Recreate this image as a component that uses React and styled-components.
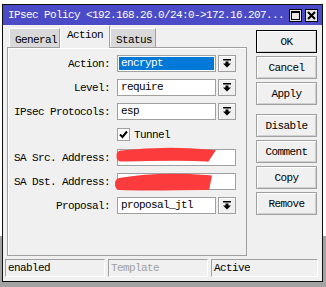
import React from 'react';
import styled, { createGlobalStyle } from 'styled-components';

const Global = createGlobalStyle`
    html, body {
        margin: 0;
        padding: 0;
    }
    body {
        font-family: "Liberation Mono", "DejaVu Sans Mono", monospace;
        font-size: 11px;
        letter-spacing: -0.6px;
        color: #000;
    }
`

const Page = styled.div`
    width: 326px;
    height: 287px;
    padding: 4px 0 0 2px;
    box-sizing: border-box;
    background: linear-gradient(#ffffff 0 236px, #a3a3a3 236px);
    overflow: hidden;
`

const Window = styled.div`
    width: 321px;
    box-sizing: border-box;
    border: 1px solid #101010;
    background: #f0f0f0;
    padding-bottom: 4px;
`

const TitleBar = styled.div`
    height: 20px;
    background: #4b4bc8;
    color: #fff;
    display: flex;
    align-items: center;
    padding: 0 4px 0 5px;
    white-space: nowrap;
`

const TitleText = styled.span`
    flex: 1;
    overflow: hidden;
`

const TitleButtons = styled.div`
    display: flex;
    gap: 3px;
`

const TitleButton = styled.div`
    width: 13px;
    height: 13px;
    box-sizing: border-box;
    border: 1px solid #000;
    background: #e6e6e6;
    display: flex;
    align-items: center;
    justify-content: center;
`

const Main = styled.div`
    display: flex;
    padding-left: 4px;
    height: 231px;
`

const LeftCol = styled.div`
    width: 240px;
    display: flex;
    flex-direction: column;
`

const Tabs = styled.div`
    height: 22px;
    display: flex;
    align-items: flex-end;
    padding-left: 2px;
    position: relative;
    z-index: 1;
`

const Tab = styled.div`
    width: ${p => p.w}px;
    height: ${p => (p.active ? 23 : 19)}px;
    margin-bottom: ${p => (p.active ? -1 : 0)}px;
    box-sizing: border-box;
    background: ${p => (p.active ? '#f0f0f0' : '#d9d9d9')};
    border-top: 1px solid #fff;
    border-left: 1px solid #fff;
    border-right: 1px solid #a0a0a0;
    padding: ${p => (p.active ? '3px 0 0 6px' : '5px 0 0 5px')};
`

const Panel = styled.div`
    flex: 1;
    border: 1px solid #a0a0a0;
    box-shadow: inset 1px 1px 0 #fff;
    padding: 7px 0 0 0;
    display: flex;
    flex-direction: column;
    gap: 7px;
`

const Row = styled.div`
    display: grid;
    grid-template-columns: 102px 99px 18px;
    column-gap: 7px;
    height: ${p => p.h || 17}px;
    align-items: center;
    position: relative;
    & > :nth-child(3) {
        margin-left: -5px;
    }
`

const Label = styled.div`
    text-align: right;
    white-space: nowrap;
`

const Field = styled.div`
    height: 17px;
    box-sizing: border-box;
    border: 1px solid #a0a0a0;
    background: #fff;
    padding: 1px;
    display: flex;
    grid-column: ${p => (p.wide ? 'span 2' : 'auto')};
    width: ${p => (p.wide ? '119px' : 'auto')};
`

const FieldText = styled.div`
    flex: 1;
    padding-left: 2px;
    line-height: 13px;
    background: ${p => (p.selected ? '#0078d7' : 'transparent')};
    color: ${p => (p.selected ? '#fff' : '#000')};
`

const DropButton = styled.div`
    width: 18px;
    height: 17px;
    box-sizing: border-box;
    border: 1px solid #a0a0a0;
    box-shadow: inset 1px 1px 0 #fff;
    background: #f0f0f0;
    display: flex;
    align-items: center;
    justify-content: center;
`

const CheckWrap = styled.label`
    grid-column: 2 / span 2;
    display: flex;
    align-items: center;
    gap: 4px;
`

const CheckBox = styled.div`
    width: 13px;
    height: 13px;
    box-sizing: border-box;
    border: 1px solid #a0a0a0;
    background: #fff;
    display: flex;
    align-items: center;
    justify-content: center;
`

const Scribble = styled.svg`
    position: absolute;
    left: 105px;
    top: -4px;
    pointer-events: none;
`

const RightCol = styled.div`
    margin-left: 9px;
    padding-top: 5px;
    width: 61px;
    display: flex;
    flex-direction: column;
    gap: 3px;
`

const Button = styled.div`
    height: 23px;
    box-sizing: border-box;
    border: 1px solid ${p => (p.primary ? '#000' : '#a0a0a0')};
    box-shadow: inset 1px 1px 0 #fff, inset -1px -1px 0 #d0d0d0;
    background: #f0f0f0;
    display: flex;
    align-items: center;
    justify-content: center;
    margin-top: ${p => (p.spaced ? 6 : 0)}px;
`

const StatusBar = styled.div`
    display: flex;
    gap: 3px;
    margin-top: 3px;
    padding-left: 2px;
`

const StatusField = styled.div`
    width: ${p => p.w}px;
    height: 18px;
    box-sizing: border-box;
    border-top: 1px solid #a0a0a0;
    border-left: 1px solid #a0a0a0;
    border-right: 1px solid #fff;
    border-bottom: 1px solid #fff;
    padding: 2px 0 0 2px;
    color: ${p => (p.dim ? '#a0a0a0' : '#000')};
`

const DropArrow = () => (
    <svg width="8" height="9" viewBox="0 0 8 9">
        <rect x="0" y="0" width="8" height="1.5" fill="#000" />
        <rect x="2.5" y="2.5" width="3" height="2.5" fill="#000" />
        <polygon points="0,4.5 8,4.5 4,8.5" fill="#000" />
    </svg>
)

const FormRow = ({ label, value, selected, drop, wide, children }) => (
    <Row>
        <Label>{label}</Label>
        <Field wide={wide}>
            <FieldText selected={selected}>{value}</FieldText>
        </Field>
        {drop && <DropButton><DropArrow /></DropButton>}
        {children}
    </Row>
)

export default function App() {
    return (
        <Page>
            <Global />
            <Window>
                <TitleBar>
                    <TitleText>IPsec Policy &lt;192.168.26.0/24:0-&gt;172.16.207...</TitleText>
                    <TitleButtons>
                        <TitleButton>
                            <svg width="9" height="9" viewBox="0 0 9 9">
                                <rect x="0.5" y="0.5" width="8" height="8" fill="none" stroke="#000" />
                                <rect x="0" y="0" width="9" height="2" fill="#000" />
                            </svg>
                        </TitleButton>
                        <TitleButton>
                            <svg width="9" height="9" viewBox="0 0 9 9">
                                <path d="M1 1 L8 8 M8 1 L1 8" stroke="#000" strokeWidth="2" />
                            </svg>
                        </TitleButton>
                    </TitleButtons>
                </TitleBar>
                <Main>
                    <LeftCol>
                        <Tabs>
                            <Tab w={51}>General</Tab>
                            <Tab w={50} active>Action</Tab>
                            <Tab w={46}>Status</Tab>
                        </Tabs>
                        <Panel>
                            <FormRow label="Action:" value="encrypt" selected drop />
                            <FormRow label="Level:" value="require" drop />
                            <FormRow label="IPsec Protocols:" value="esp" drop />
                            <Row h={15}>
                                <span />
                                <CheckWrap>
                                    <CheckBox>
                                        <svg width="9" height="9" viewBox="0 0 9 9">
                                            <path d="M1 4.5 L3.5 7 L8 1.5" fill="none" stroke="#000" strokeWidth="2" />
                                        </svg>
                                    </CheckBox>
                                    Tunnel
                                </CheckWrap>
                            </Row>
                            <FormRow label="SA Src. Address:" value="" wide>
                                <Scribble width="110" height="22" viewBox="0 0 110 22">
                                    <path d="M13 10 C40 7, 70 6, 100 9 L98 12 C70 10, 40 12, 13 12" fill="none" stroke="#fc3c3c" strokeWidth="9" strokeLinecap="round" />
                                </Scribble>
                            </FormRow>
                            <FormRow label="SA Dst. Address:" value="" wide>
                                <Scribble width="110" height="26" viewBox="0 0 110 26">
                                    <path d="M12 14 C40 9, 70 9, 98 11 L97 16 C70 16, 40 17, 12 16" fill="none" stroke="#fc3c3c" strokeWidth="10" strokeLinecap="round" />
                                </Scribble>
                            </FormRow>
                            <FormRow label="Proposal:" value="proposal_jtl" drop />
                        </Panel>
                    </LeftCol>
                    <RightCol>
                        <Button primary>OK</Button>
                        <Button>Cancel</Button>
                        <Button>Apply</Button>
                        <Button spaced>Disable</Button>
                        <Button>Comment</Button>
                        <Button>Copy</Button>
                        <Button>Remove</Button>
                    </RightCol>
                </Main>
                <StatusBar>
                    <StatusField w={100}>enabled</StatusField>
                    <StatusField w={100} dim>Template</StatusField>
                    <StatusField w={107}>Active</StatusField>
                </StatusBar>
            </Window>
        </Page>
    );
}
